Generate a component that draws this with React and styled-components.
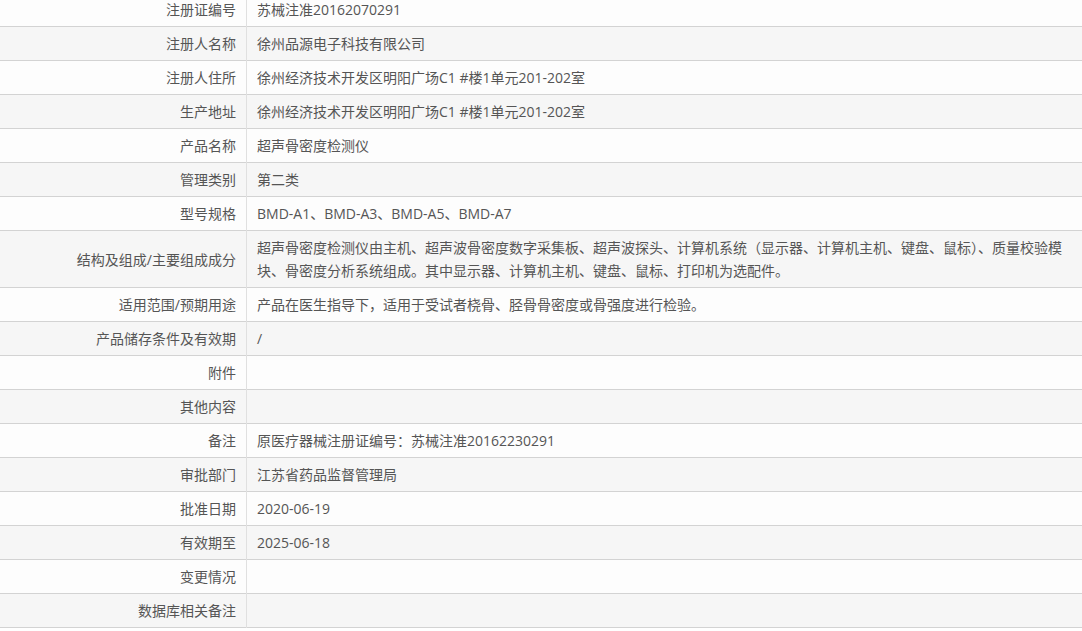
import styled, { createGlobalStyle } from "styled-components"

const GlobalStyle = createGlobalStyle`
  html, body {
    margin: 0;
    padding: 0;
    background: #fff;
    overflow: hidden;
  }
`

const rows = [
  ["注册证编号", "苏械注准20162070291"],
  ["注册人名称", "徐州品源电子科技有限公司"],
  ["注册人住所", "徐州经济技术开发区明阳广场C1 #楼1单元201-202室"],
  ["生产地址", "徐州经济技术开发区明阳广场C1 #楼1单元201-202室"],
  ["产品名称", "超声骨密度检测仪"],
  ["管理类别", "第二类"],
  ["型号规格", "BMD-A1、BMD-A3、BMD-A5、BMD-A7"],
  ["结构及组成/主要组成成分", "超声骨密度检测仪由主机、超声波骨密度数字采集板、超声波探头、计算机系统（显示器、计算机主机、键盘、鼠标）、质量校验模块、骨密度分析系统组成。其中显示器、计算机主机、键盘、鼠标、打印机为选配件。"],
  ["适用范围/预期用途", "产品在医生指导下，适用于受试者桡骨、胫骨骨密度或骨强度进行检验。"],
  ["产品储存条件及有效期", "/"],
  ["附件", ""],
  ["其他内容", ""],
  ["备注", "原医疗器械注册证编号：苏械注准20162230291"],
  ["审批部门", "江苏省药品监督管理局"],
  ["批准日期", "2020-06-19"],
  ["有效期至", "2025-06-18"],
  ["变更情况", ""],
  ["数据库相关备注", ""],
]

export default function App() {
  return (
    <>
      <GlobalStyle />
      <Table>
        <tbody>
          {rows.map(([label, value], i) => (
            <Row key={label} $odd={i % 2 === 1}>
              <Label>{label}</Label>
              <Value>{value}</Value>
            </Row>
          ))}
        </tbody>
      </Table>
    </>
  )
}

const Table = styled.table`
  width: 100%;
  margin-top: -7px;
  border-collapse: collapse;
  font-family: "Open Sans", "Noto Sans CJK SC", sans-serif;
  font-size: 14px;
  line-height: 23px;
  color: #555;
`

const Row = styled.tr`
  background: ${(p) => (p.$odd ? "#f6f6f6" : "#fdfdfd")};
  border-bottom: 1px solid #d3d3d3;
`

const Label = styled.td`
  width: 226px;
  padding: 5px 10px;
  text-align: right;
  vertical-align: middle;
  border-right: 1px solid #e0e0e0;
  white-space: nowrap;
`

const Value = styled.td`
  padding: 5px 10px;
  text-align: left;
  vertical-align: middle;
`
